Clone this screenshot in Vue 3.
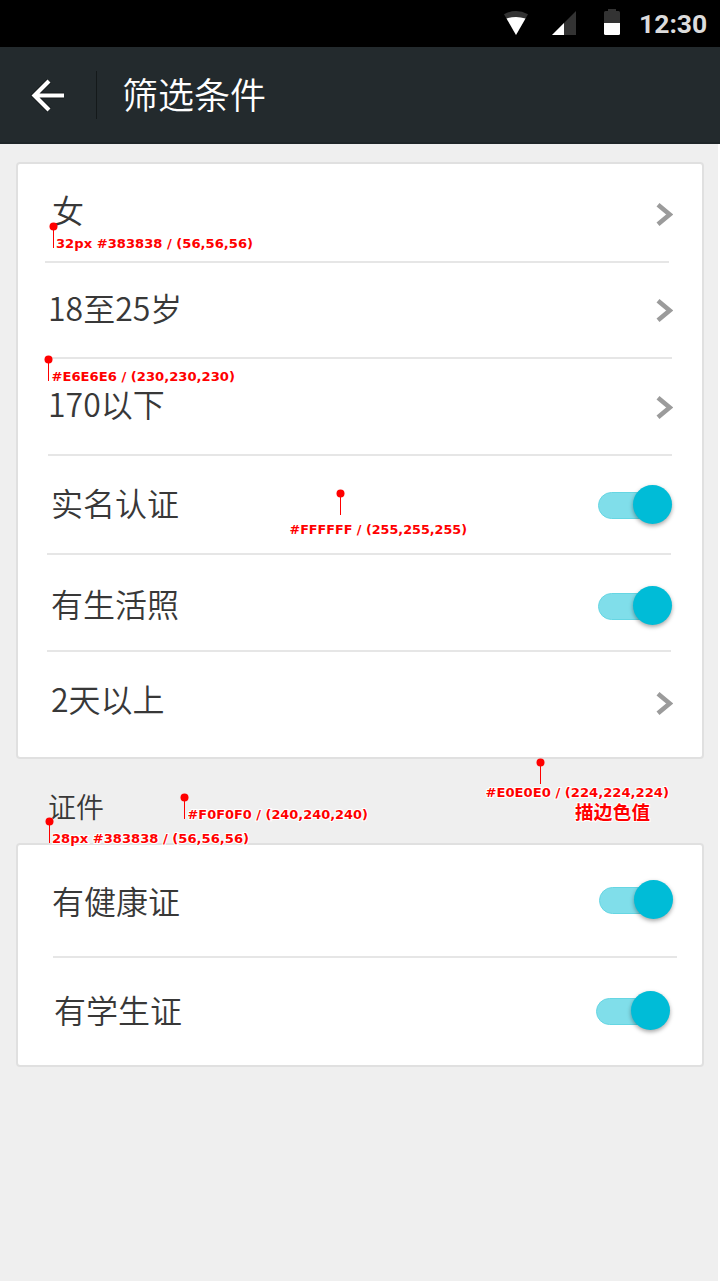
<script setup>
// Row heights include the 2px divider; offsets are relative to the row's top left.
const groups = [
  {
    name: 'basic',
    rows: [
      { label: '女', h: 99, x: 34, y: 29, type: 'link', cy: 38, end: 29, lineL: 27, lineR: 33 },
      { label: '18至25岁', h: 96, x: 30, y: 28, type: 'link', cy: 35, end: 29, lineL: 30, lineR: 30 },
      { label: '170以下', h: 97, x: 30, y: 28, type: 'link', cy: 36, end: 29, lineL: 30, lineR: 30 },
      { label: '实名认证', h: 99, x: 33, y: 30, type: 'switch', cy: 29, end: 30, lineL: 29, lineR: 31 },
      { label: '有生活照', h: 97, x: 33, y: 32, type: 'switch', cy: 31, end: 30, lineL: 29, lineR: 31 },
      { label: '2天以上', h: 105, x: 33, y: 30, type: 'link', cy: 39, end: 29 },
    ],
  },
  {
    name: 'papers',
    title: '证件',
    rows: [
      { label: '有健康证', h: 113, x: 34, y: 39, type: 'switch', cy: 35, end: 29, lineL: 35, lineR: 25 },
      { label: '有学生证', h: 107, x: 36, y: 35, type: 'switch', cy: 33, end: 32 },
    ],
  },
]

const notes = [
  { px: 53.5, py: 226.5, x: 56, y: 248, w: 197, text: '32px #383838 / (56,56,56)' },
  { px: 48.5, py: 359.5, x: 51.5, y: 381, w: 183.5, text: '#E6E6E6 / (230,230,230)' },
  { px: 340.5, py: 493.5, x: 289.5, y: 534, w: 177.5, text: '#FFFFFF / (255,255,255)' },
  { px: 540.5, py: 762.5, x: 485.5, y: 797, w: 183.5, text: '#E0E0E0 / (224,224,224)' },
  { px: 184.5, py: 797.5, x: 187.5, y: 819, w: 180.5, text: '#F0F0F0 / (240,240,240)' },
  { px: 49.5, py: 821.5, x: 52, y: 843, w: 197, text: '28px #383838 / (56,56,56)' },
]

const rowVars = (r) => ({
  '--h': r.h + 'px',
  '--x': r.x + 'px',
  '--y': r.y + 'px',
  '--cy': r.cy + 'px',
  '--end': r.end + 'px',
  '--ll': (r.lineL || 0) + 'px',
  '--lr': (r.lineR || 0) + 'px',
})
</script>

<template>
  <div class="screen">
    <div class="status">
      <svg class="wifi" width="24" height="24" viewBox="0 0 24 24">
        <path d="M0 3.2Q12-3.2 24 3.2L12 24Z" fill="#333" />
        <path d="M2.500 7.500Q12 4.500 21.500 7.500L12 24Z" fill="#fff" />
      </svg>
      <svg class="signal" width="24" height="24" viewBox="0 0 24 24">
        <path d="M24 0V24H0Z" fill="#333" />
        <path d="M12 12V24H0Z" fill="#fff" />
      </svg>
      <svg class="battery" width="16" height="26" viewBox="0 0 16 26">
        <path d="M4 0h8v2h2.500q1.500 0 1.500 1.500V14H0V3.500Q0 2 1.500 2H4Z" fill="#333" />
        <path d="M0 14h16v10.500q0 1.500-1.500 1.500h-13Q0 26 0 24.500Z" fill="#fff" />
      </svg>
      <span class="time">12:30</span>
    </div>
    <header class="bar">
      <svg class="back" width="36" height="36" viewBox="0 0 36 36">
        <path d="M19 3L4.500 17.500L19 32M4.500 17.500H34" fill="none" stroke="#14191b" stroke-width="6" />
        <path d="M19 3L4.500 17.500L19 32M4.500 17.500H34" fill="none" stroke="#fff" stroke-width="4.200" />
      </svg>
      <i class="sep"></i>
      <h1>筛选条件</h1>
    </header>
    <main>
      <section v-for="g in groups" :key="g.name">
        <h2 v-if="g.title">{{ g.title }}</h2>
        <div class="card">
          <div v-for="r in g.rows" :key="r.label" class="row" :style="rowVars(r)">
            <div class="content">
              <span class="label">{{ r.label }}</span>
              <svg v-if="r.type === 'link'" class="control" width="17" height="24" viewBox="0 0 17 24">
                <path d="M2 2.800L13.700 12.500L2 22.200" fill="none" stroke="#9b9b9b" stroke-width="4.600" />
              </svg>
              <span v-else class="control switch"><i class="knob"></i></span>
            </div>
            <i v-if="r.lineL" class="line"></i>
          </div>
        </div>
      </section>
    </main>
    <svg class="notes" width="720" height="1281" viewBox="0 0 720 1281">
      <g v-for="n in notes" :key="n.text">
        <circle :cx="n.px" :cy="n.py" r="4" />
        <path :d="`M${n.px} ${n.py}v21.500`" stroke="#f00" />
        <text :x="n.x" :y="n.y" :textLength="n.w" lengthAdjust="spacingAndGlyphs">{{ n.text }}</text>
      </g>
      <text class="cn" x="575" y="818.500" textLength="75">描边色值</text>
    </svg>
  </div>
</template>

<style>
body { margin: 0; background: #fff; }
</style>

<style scoped>
.screen {
  position: relative;
  width: 720px;
  height: 1281px;
  overflow: hidden;
  font-family: "Noto Sans CJK SC", sans-serif;
  color: #383838;
}
.status {
  height: 47px;
  box-sizing: border-box;
  padding-right: 12px;
  display: flex;
  justify-content: flex-end;
  align-items: flex-start;
  background: #000;
}
.wifi { margin: 11px 24px 0 0; }
.signal { margin: 11px 28px 0 0; }
.battery { margin: 9px 19px 0 0; }
.time {
  width: 69px;
  margin-top: 8px;
  font: bold 26.500px/32px Roboto, sans-serif;
  color: #dcdcdc;
  white-space: nowrap;
}
.bar {
  height: 97px;
  box-sizing: border-box;
  border-bottom: 2px solid #1e2528;
  display: flex;
  align-items: flex-start;
  background: #232a2d;
  color: #fff;
}
.back { margin: 31px 0 0 30px; }
.sep { width: 1px; height: 48px; margin: 24px 0 0 30px; background: #14191a; }
h1 { margin: 28px 0 0 25px; font-size: 36px; line-height: 36px; font-weight: 350; }
main {
  width: 718px;
  height: 1137px;
  box-sizing: border-box;
  padding: 18px 14px 0 16px;
  background: #efefef;
}
h2 { height: 51px; margin: 0; padding: 33px 0 0 32px; font-size: 28px; line-height: 28px; font-weight: 350; }
.card { border: 2px solid #e0e0e0; border-radius: 4px; background: #fff; }
.row { height: var(--h); display: flex; flex-direction: column; }
.content { flex: 1; display: flex; align-items: flex-start; justify-content: space-between; min-height: 0; }
.label {
  margin: var(--y) 0 0 var(--x);
  font-size: 32px;
  line-height: 32px;
  font-weight: 350;
}
.control { flex: none; margin: var(--cy) var(--end) 0 0; }
.switch { width: 74px; height: 39px; display: flex; justify-content: flex-end; position: relative; }
.switch::before {
  content: "";
  position: absolute;
  left: 0;
  top: 7px;
  width: 60px;
  height: 27px;
  box-sizing: border-box;
  border: 1px solid #66d6e3;
  border-radius: 14px;
  background: #80deea;
}
.knob {
  position: relative;
  width: 39px;
  height: 39px;
  border-radius: 50%;
  background: #00bcd7;
  box-shadow: 0 2px 4px rgba(0, 0, 0, 0.35);
}
.line { height: 2px; margin: 0 var(--lr) 0 var(--ll); background: #e6e6e6; }
.notes { position: absolute; left: 0; top: 0; fill: #f00; }
.notes text {
  font: bold 12px "DejaVu Sans", sans-serif;
  stroke: #fff;
  stroke-width: 2px;
  paint-order: stroke;
}
.notes .cn { font: bold 18.500px "Noto Sans CJK SC", sans-serif; }
</style>
